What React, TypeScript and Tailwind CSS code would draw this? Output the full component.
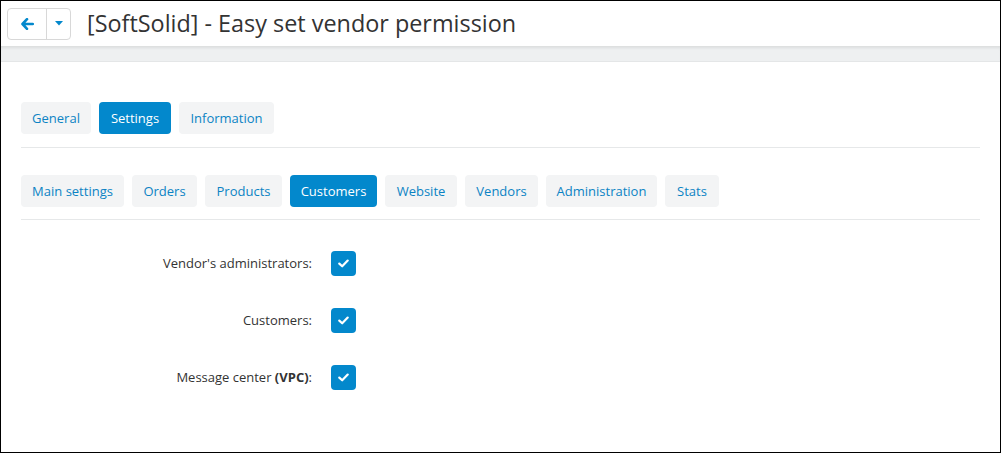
import React from 'react';

const mainTabs = [
  { label: 'General', w: 'w-[70px]' },
  { label: 'Settings', w: 'w-[72px]', active: true },
  { label: 'Information', w: 'w-[95px]' },
];

const subTabs = [
  { label: 'Main settings', w: 'w-[103px]' },
  { label: 'Orders', w: 'w-[65px]' },
  { label: 'Products', w: 'w-[77px]' },
  { label: 'Customers', w: 'w-[87px]', active: true },
  { label: 'Website', w: 'w-[72px]' },
  { label: 'Vendors', w: 'w-[73px]' },
  { label: 'Administration', w: 'w-[111px]' },
  { label: 'Stats', w: 'w-[54px]' },
];

function Tab({ label, w, active }: { label: string; w: string; active?: boolean }) {
  return (
    <button
      className={`${w} h-[32px] rounded-[4px] pt-px text-center text-[13px] whitespace-nowrap ${
        active ? 'bg-[#0388cc] text-white' : 'bg-[#f3f4f5] text-[#0b83c4]'
      }`}
    >
      {label}
    </button>
  );
}

function CheckBox() {
  return (
    <div className="flex h-[25px] w-[25px] items-center justify-center rounded-[4px] bg-[#0388cc]">
      <svg width="11" height="9" viewBox="0 0 11 9" fill="none">
        <path d="M1.3 4.6 L4.2 7.3 L9.7 1.6" stroke="white" strokeWidth="2.2" strokeLinecap="round" strokeLinejoin="round" />
      </svg>
    </div>
  );
}

function Row({ children }: { children: React.ReactNode }) {
  return (
    <div className="flex h-[25px] items-center">
      <div className="w-[291px] text-right text-[13px] text-[#333]">{children}</div>
      <div className="ml-[19px]">
        <CheckBox />
      </div>
    </div>
  );
}

export default function App() {
  return (
    <div
      className="h-[453px] w-[1001px] overflow-hidden border border-black bg-white"
      style={{ fontFamily: '"Open Sans", "Noto Sans", sans-serif' }}
    >
      {/* Header */}
      <div className="flex h-[45px] items-center">
        <div className="ml-[6px] flex h-[32px] rounded-[4px] border border-[#d8d8d8] bg-white">
          <div className="flex w-[39px] items-center justify-center border-r border-[#d8d8d8]">
            <svg width="13" height="12" viewBox="0 0 13 12">
              <path d="M6 1.2 L1.5 6 L6 10.8 M1.8 6 H11.8" stroke="#0388cc" strokeWidth="2.6" fill="none" strokeLinecap="round" strokeLinejoin="round" />
            </svg>
          </div>
          <div className="flex w-[23px] items-center justify-center">
            <svg width="8" height="5" viewBox="0 0 8 5">
              <path d="M0 0 H8 L4 4.5 Z" fill="#0388cc" />
            </svg>
          </div>
        </div>
        <h1 className="ml-[16px] text-[23.4px] leading-none text-[#333] whitespace-nowrap">
          [SoftSolid] - Easy set vendor permission
        </h1>
      </div>

      {/* Gray band */}
      <div className="h-[16px] border-b border-[#e4e6e7] bg-[#eef0f1] shadow-[inset_0_3px_3px_-1px_rgba(0,0,0,0.08)]" />

      {/* Content */}
      <div className="px-[20px] pt-[40px]">
        <div className="flex gap-[8px]">
          {mainTabs.map((t) => (
            <Tab key={t.label} {...t} />
          ))}
        </div>
        <div className="mt-[13px] h-px bg-[#e6e8e9]" />

        <div className="mt-[27px] flex gap-[8px]">
          {subTabs.map((t) => (
            <Tab key={t.label} {...t} />
          ))}
        </div>
        <div className="mt-[12px] h-px bg-[#e6e8e9]" />

        <div className="mt-[31px] flex flex-col gap-[32px]">
          <Row>Vendor's administrators:</Row>
          <Row>Customers:</Row>
          <Row>
            Message center <b>(VPC)</b>:
          </Row>
        </div>
      </div>
    </div>
  );
}
